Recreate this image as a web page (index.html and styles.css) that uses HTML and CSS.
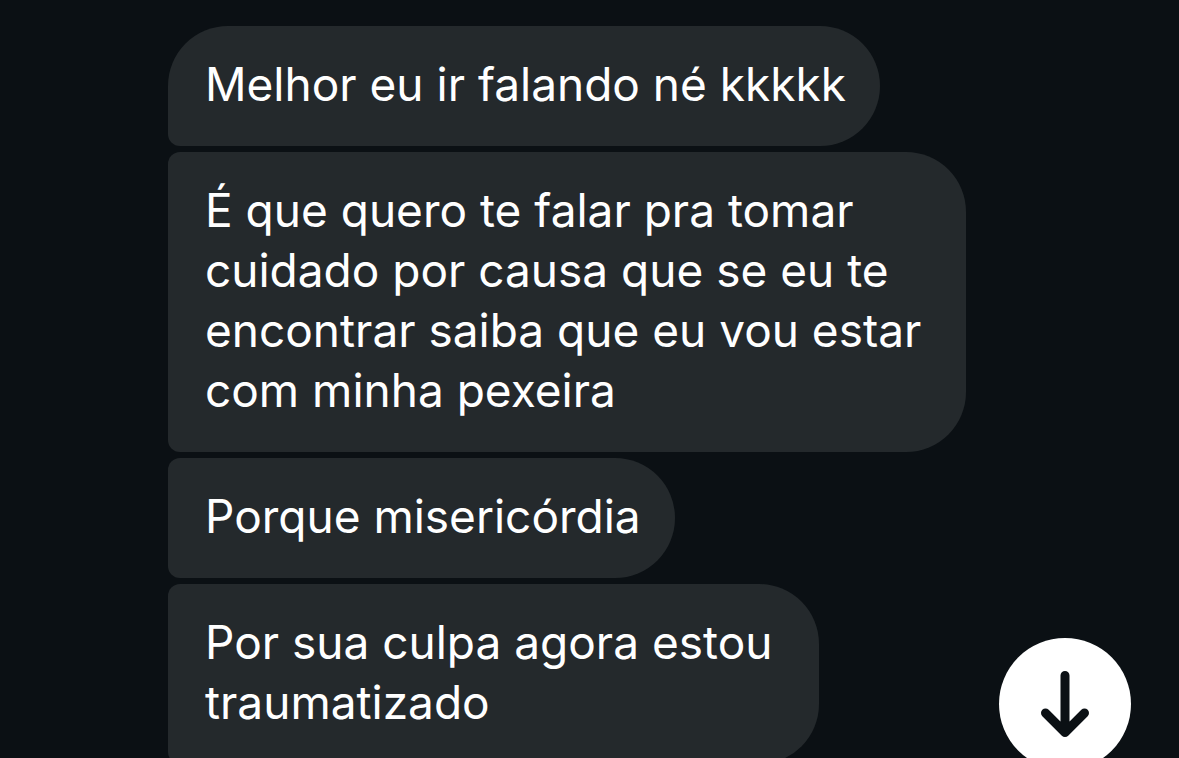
FILE: index.html
```html
<!DOCTYPE html>
<html lang="pt-BR">
<head>
  <meta charset="UTF-8" />
  <meta name="viewport" content="width=device-width, initial-scale=1">
  <title>Conversa</title>
  <link rel="stylesheet" href="styles.css">
</head>
<body>

  <main class="chat">
    <p class="message first">Melhor eu ir falando né kkkkk</p>
    <p class="message">É que quero te falar pra tomar cuidado por causa que se eu te encontrar saiba que eu vou estar com minha pexeira</p>
    <p class="message">Porque misericórdia</p>
    <p class="message narrow">Por sua culpa agora estou traumatizado</p>
  </main>

  <button class="scroll-button" type="button" aria-label="Ir para o fim">
    <svg viewBox="0 0 132 132" aria-hidden="true">
      <path d="M66 37.5V94.5M46.5 75L66 94.5L85.5 75" />
    </svg>
  </button>

</body>
</html>
```
FILE: styles.css
```css
* {
  margin: 0;
  padding: 0;
  box-sizing: border-box;
}

body {
  height: 100vh;
  overflow: hidden;
  background: #0b1014;
  color: #fff;
  font-family: Inter, sans-serif;
  font-size: 46px;
  line-height: 60px;
}

.chat {
  display: flex;
  flex-direction: column;
  align-items: flex-start;
  gap: 6px;
  padding: 26px 168px 0;
}

.message {
  max-width: 798px;
  padding: 28px 34px 32px 37px;
  border-radius: 12px 60px 60px 12px;
  background: #24292c;
}

.message.first {
  border-top-left-radius: 60px;
}

.message.narrow {
  max-width: 651px;
}

/* floats over the conversation */
.scroll-button {
  position: fixed;
  right: 48px;
  bottom: -12px;
  width: 132px;
  height: 132px;
  border: none;
  border-radius: 50%;
  background: #fff;
  cursor: pointer;
}

.scroll-button svg {
  display: block;
  width: 100%;
  height: 100%;
  fill: none;
  stroke: #0b1014;
  stroke-width: 9;
  stroke-linecap: round;
  stroke-linejoin: round;
}
```
